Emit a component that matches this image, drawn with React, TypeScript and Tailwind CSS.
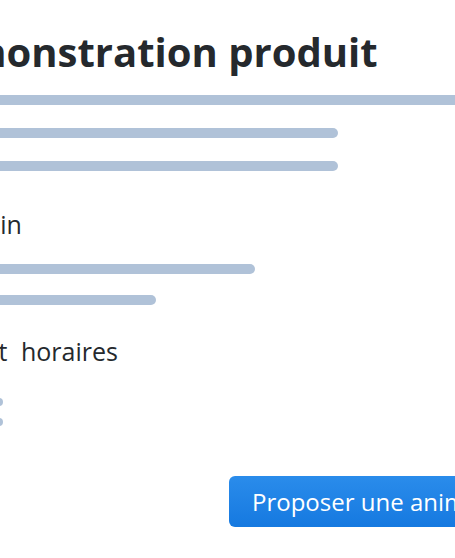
import React from "react";

export default function App() {
  return (
    <div
      className="w-[455px] h-[558px] overflow-hidden bg-white"
      style={{ fontFamily: '"Open Sans", sans-serif' }}
    >
      <div className="ml-[-66px] w-[640px] pt-[26px] flex flex-col">
        <h1 className="ml-[-20px] text-[40px] leading-[52px] font-bold text-[#25292d] whitespace-nowrap">
          Démonstration produit
        </h1>
        <div className="mt-[17px] h-[10px] w-[640px] rounded-full bg-[#b0c2d8]" />
        <div className="mt-[23px] h-[10px] w-[404px] rounded-full bg-[#b0c2d8]" />
        <div className="mt-[23px] h-[10px] w-[404px] rounded-full bg-[#b0c2d8]" />
        <h2 className="mt-[36px] ml-[9px] text-[25px] leading-[34px] text-[#25292d] whitespace-nowrap">
          Besoin
        </h2>
        <div className="mt-[23px] h-[10px] w-[321px] rounded-full bg-[#b0c2d8]" />
        <div className="mt-[21px] h-[10px] w-[222px] rounded-full bg-[#b0c2d8]" />
        <h2 className="mt-[29px] ml-[-18px] text-[25px] leading-[34px] text-[#25292d] whitespace-nowrap [word-spacing:7px]">
          Date et horaires
        </h2>
        <div className="mt-[30px] h-[8px] w-[69px] rounded-full bg-[#b0c2d8]" />
        <div className="mt-[12px] h-[8px] w-[69px] rounded-full bg-[#b0c2d8]" />
        <div className="mt-[50px] pl-[295px]">
          <button className="h-[51px] px-[23px] rounded-[6px] bg-gradient-to-b from-[#2a8ceb] to-[#1579e0] text-white text-[24px] whitespace-nowrap">
            Proposer une animation
          </button>
        </div>
      </div>
    </div>
  );
}
